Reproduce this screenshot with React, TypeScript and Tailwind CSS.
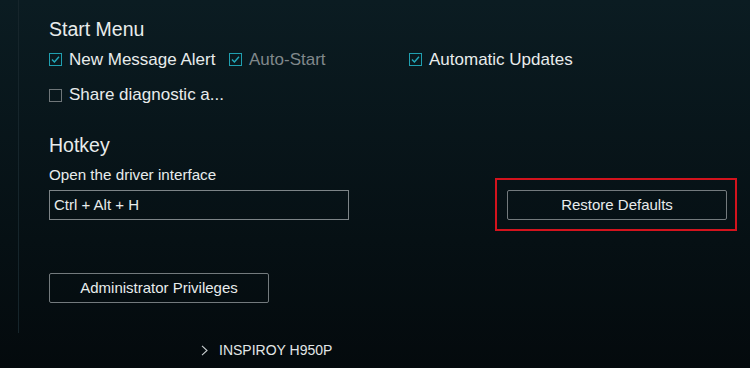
import { ReactNode } from "react";

function CheckBox({ checked }: { checked: boolean }) {
  return (
    <svg width="13" height="13" viewBox="0 0 13 13" className="shrink-0">
      <rect
        x="0.5"
        y="0.5"
        width="12"
        height="12"
        fill="none"
        stroke={checked ? "#1f9fb0" : "#6f7679"}
      />
      {checked && (
        <path d="M3 6.6 L5.4 9 L10 3.8" fill="none" stroke="#23a9ba" strokeWidth="1.4" />
      )}
    </svg>
  );
}

function Option({ checked, muted, children }: { checked: boolean; muted?: boolean; children: ReactNode }) {
  return (
    <label className="flex items-center gap-[7px] whitespace-nowrap">
      <CheckBox checked={checked} />
      <span className={`text-[17px] ${muted ? "text-[#80888b]" : "text-[#e8ecec]"}`}>{children}</span>
    </label>
  );
}

export default function App() {
  return (
    <div
      className="flex h-[368px] w-[750px] flex-col overflow-hidden bg-gradient-to-b from-[#0b1c22] to-[#040a0d] text-[#e8ecec]"
      style={{ fontFamily: '"Liberation Sans", Arial, sans-serif' }}
    >
      <div className="ml-[18px] flex h-[333px] flex-col border-l border-[#16252b] pl-[30px] pt-[17px]">
        <div className="flex h-[26px] items-center text-[19.5px]">Start Menu</div>

        <div className="mt-[4px] grid h-[24px] grid-cols-[180px_180px_180px] items-center">
          <Option checked>New Message Alert</Option>
          <Option checked muted>
            Auto-Start
          </Option>
          <Option checked>Automatic Updates</Option>
        </div>

        <div className="mt-[12px] flex h-[24px] items-center">
          <Option checked={false}>Share diagnostic a...</Option>
        </div>

        <div className="mt-[26px] flex h-[26px] items-center text-[19.5px]">Hotkey</div>

        <div className="flex items-end">
          <div className="flex flex-col">
            <div className="mt-[6px] flex h-[20px] items-center text-[15.2px]">Open the driver interface</div>
            <div className="mt-[5px] flex h-[30px] w-[300px] items-center border border-[#7d8487] px-[4px] text-[15px]">
              Ctrl + Alt + H
            </div>
          </div>
          <div className="-mb-[11px] ml-[146px] border-2 border-[#d3131d] pb-[9px] pl-[10px] pr-[8px] pt-[10px]">
            <button
              type="button"
              className="flex h-[30px] w-[220px] items-center justify-center rounded-[2px] border border-[#737a7d] text-[15px]"
            >
              Restore Defaults
            </button>
          </div>
        </div>

        <button
          type="button"
          className="mt-[53px] flex h-[30px] w-[220px] items-center justify-center rounded-[2px] border border-[#737a7d] text-[15px]"
        >
          Administrator Privileges
        </button>
      </div>

      <div className="flex h-[35px] items-center pl-[201px]">
        <svg width="7" height="11" viewBox="0 0 7 11" className="shrink-0">
          <path d="M1 0.8 L6 5.5 L1 10.2" fill="none" stroke="#c9cfd1" strokeWidth="1.1" />
        </svg>
        <span className="ml-[11px] text-[14px] text-[#e2e6e7]">INSPIROY H950P</span>
      </div>
    </div>
  );
}
